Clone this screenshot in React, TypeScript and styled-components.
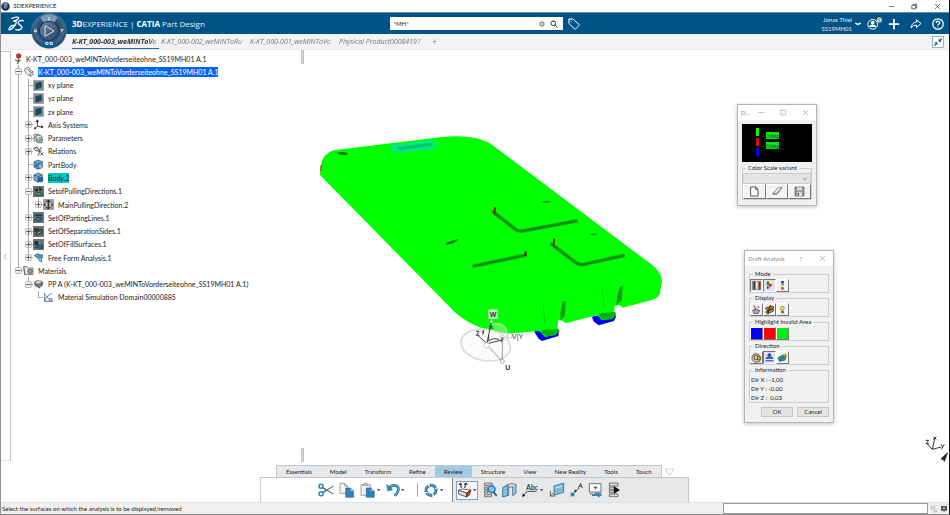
import React from "react";
import styled, { createGlobalStyle, css } from "styled-components";

const GlobalStyle = createGlobalStyle`
  * { box-sizing: border-box; }
  html, body, #root { height: 100%; }
  body { margin: 0; background: #fff; }
  body, button, input, select { font-family: Lato, "Open Sans", sans-serif; font-size: 6px; color: #222; }
  button { padding: 0; border: 0; background: none; cursor: pointer; white-space: nowrap; }
  svg { display: block; flex: none; }
`;

const Shell = styled.div`
  display: flex;
  flex-direction: column;
  height: 100vh;
  overflow: hidden;
  border-left: 1px solid #8d9297;
  border-right: 1px solid #111;
  border-bottom: 1px solid #8a8a8a;
`;

const TitleBar = styled.header`
  display: flex;
  align-items: center;
  gap: 3px;
  height: 12px;
  padding: 0 5px 0 0;
  background: #fff;
  line-height: 12px;
`;
const TitleText = styled.span`
  flex: 1;
  color: #222;
`;
const WindowButton = styled.button<{ $w?: number }>`
  display: flex;
  justify-content: center;
  width: ${(p) => p.$w ?? 14}px;
  color: #888;
`;
const WindowButtons = styled.div`
  display: flex;
  gap: 9px;
`;

const AppBar = styled.div`
  display: flex;
  align-items: center;
  height: 22px;
  background: #005386;
  border-top: 1px solid #5d8fb0;
  color: #fff;
`;
const Brand = styled.div`
  display: flex;
  align-items: center;
  flex: 1;
  padding-left: 7px;
`;
const CompassSlot = styled.div`
  position: relative;
  width: 47px;
  height: 21px;
`;
const CompassButton = styled.button`
  position: absolute;
  left: 6px;
  top: 0;
  z-index: 3;
`;
const BrandName = styled.h1`
  margin: 0;
  font: 400 8px "Open Sans", sans-serif;
  white-space: pre;
  color: #e6eff5;
  b { color: #fff; }
`;
const Search = styled.form`
  display: flex;
  align-items: center;
  gap: 5px;
  width: 173px;
  height: 13px;
  margin-left: 5px;
  padding: 0 5px 0 4px;
  background: #fff;
`;
const SearchInput = styled.input`
  flex: 1;
  min-width: 0;
  height: 11px;
  padding: 0;
  border: 0;
  outline: 0;
  background: none;
`;
const BarRight = styled.div`
  display: flex;
  align-items: center;
  flex: 1;
  padding: 0 5px;
`;
const UserName = styled.div`
  margin-left: auto;
  line-height: 9px;
  text-align: right;
  color: #e2edf4;
`;
const BarActions = styled.div<{ $gap: number }>`
  display: flex;
  align-items: center;
  gap: ${(p) => p.$gap}px;
  margin-left: ${(p) => (p.$gap > 8 ? 10 : 3)}px;
`;

const TabStrip = styled.nav`
  display: flex;
  align-items: center;
  height: 16px;
  padding: 0 5px 0 71px;
  background: #f1f3f4;
  border-bottom: 1px solid #e8eaeb;
`;
const DocTab = styled.button<{ $active?: boolean }>`
  width: 87px;
  height: 15px;
  margin-right: 2px;
  border-bottom: 1px solid ${(p) => (p.$active ? "#1a6fa8" : "transparent")};
  color: ${(p) => (p.$active ? "#333" : "#777")};
  font-family: "Open Sans", sans-serif;
  font-size: 7px;
  font-style: italic;
  font-weight: ${(p) => (p.$active ? 700 : 400)};
  text-align: left;
  line-height: 13px;
`;
const DocTabLabel = styled.span`
  display: block;
  mask-image: linear-gradient(90deg, #000 88%, transparent);
`;
const AddTab = styled.button`
  margin-left: 4px;
  color: #999;
  font-size: 9px;
`;
const Restore = styled.button`
  display: flex;
  margin-left: auto;
`;

const Workspace = styled.main`
  position: relative;
  display: flex;
  flex: 1;
  min-height: 0;
  background: #fff;
`;
const Scene = styled.svg`
  position: absolute;
  inset: 0;
  width: 100%;
  height: 100%;
`;
const Gutter = styled.button`
  display: flex;
  align-items: center;
  justify-content: center;
  width: 10px;
  margin: 1px 0 41px 0;
  border: 1px solid #c4c4c4;
  border-left: 0;
  border-bottom-color: #ddd;
`;
const TreePanel = styled.aside`
  position: relative;
  flex: none;
  width: 290px;
  padding: 2px 0 0 2px;
  font-size: 7px;
`;
const Tree = styled.ul`
  display: grid;
  grid-auto-rows: 1fr;
  min-height: 252px;
  margin: 0;
  padding: 0;
  list-style: none;
`;
const TreeRow = styled.li`
  display: flex;
  align-items: center;
  min-height: 0;
  white-space: nowrap;
`;
type Line = "none" | "full" | "up";
const Guide = styled.span<{ $line: Line; $tick?: boolean }>`
  display: flex;
  align-items: center;
  align-self: stretch;
  width: 10px;
  padding-left: 2px;
  background-repeat: no-repeat;
  background-image: ${(p) => (p.$line === "none" ? "none" : "linear-gradient(#a9a9a9, #a9a9a9)")},
    ${(p) => (p.$tick ? "linear-gradient(#a9a9a9, #a9a9a9)" : "none")};
  background-size: 1px ${(p) => (p.$line === "up" ? "50%" : "100%")}, 5px 1px;
  background-position: 5px 0, right center;
`;
const Toggle = styled.button`
  display: flex;
`;
const NodeIcon = styled.span`
  display: flex;
  width: 11px;
  margin: 0 4px 0 0;
`;
const RootIcon = styled.span`
  display: flex;
  width: 11px;
  margin-right: 2px;
`;
const NodeLabel = styled.span<{ $mark?: "selected" | "active" }>`
  line-height: 10px;
  ${(p) => p.$mark === "selected" && css`background: #0a63f0; color: #fff;`}
  ${(p) => p.$mark === "active" && css`background: #00c8c8;`}
`;
const Splitter = styled.div`
  position: relative;
  display: flex;
  flex-direction: column;
  justify-content: space-between;
  padding-bottom: 40px;
`;
const SplitMark = styled.span`
  width: 3px;
  height: 14px;
  background: #dcdcdc;
  border: 0 solid #c0c0c0;
  border-width: 0 1px;
`;

const Floating = styled.section<{ $top: number; $right: number; $width: number }>`
  position: absolute;
  top: ${(p) => p.$top}px;
  right: ${(p) => p.$right}px;
  width: ${(p) => p.$width}px;
  background: #f0f0f0;
  border: 1px solid #b5b5b5;
  box-shadow: 0 1px 4px rgba(0, 0, 0, 0.25);
`;
const FloatTitle = styled.header`
  display: flex;
  align-items: center;
  height: 15px;
  padding: 0 7px 0 3px;
  background: #fff;
`;
const FloatName = styled.h2`
  flex: 1;
  margin: 0;
  font-size: 6px;
  font-weight: 400;
  color: #8a8a8a;
`;
const FloatButtons = styled.div`
  display: flex;
  gap: 15px;
`;
const FloatBody = styled.div`
  padding: 3px 4px 5px;
`;
const Group = styled.fieldset`
  min-width: 0;
  margin: 0;
  padding: 0;
  border: 1px solid #cfcfcf;
`;
const GroupTitle = styled.legend`
  margin-left: 3px;
  padding: 0 2px;
  line-height: 10px;
`;
const ToolRow = styled.div`
  display: flex;
`;
const Tool = styled.button<{ $on?: boolean; $wide?: boolean }>`
  display: flex;
  align-items: center;
  justify-content: center;
  flex: ${(p) => (p.$wide ? 1 : "none")};
  width: 13px;
  height: ${(p) => (p.$wide ? 15 : 13)}px;
  border: 1px solid;
  border-color: ${(p) => (p.$on ? "#777 #fff #fff #777" : "#fff #777 #777 #fff")};
  background: ${(p) => (p.$on ? "#e2e2e6" : "#f3f3f3")};
`;
const Swatch = styled.span<{ $color: string }>`
  width: 11px;
  height: 11px;
  background: ${(p) => p.$color};
`;
const InfoLine = styled.p`
  margin: 0;
  padding-left: 1px;
  line-height: 9px;
  white-space: pre;
`;
const DialogButtons = styled.div`
  display: flex;
  justify-content: flex-end;
  gap: 4px;
  margin-top: 4px;
`;
const DialogButton = styled.button`
  width: 32px;
  height: 10px;
  border: 1px solid #c6c6c6;
  background: #e4e4e4;
  line-height: 8px;
`;
const ScaleView = styled.div`
  display: flex;
  gap: 3px;
  height: 38px;
  margin: 1px 0;
  padding: 4px 0 0 14px;
  background: #000;
`;
const ScaleBars = styled.div`
  display: grid;
  gap: 2px;
  align-content: start;
`;
const ScaleBar = styled.span<{ $color: string }>`
  width: 3px;
  height: 8px;
  background: ${(p) => p.$color};
`;
const ScaleValues = styled.div`
  display: grid;
  gap: 3px;
  align-content: start;
  padding-top: 4px;
`;
const ScaleValue = styled.span`
  display: flex;
  align-items: center;
  gap: 2px;
  color: #0f0;
  line-height: 7px;
  mark { background: #0e0; color: #064; }
`;
const VariantBox = styled.div`
  display: grid;
  align-items: center;
  svg {
    grid-area: 1 / 1;
    justify-self: end;
    margin-right: 3px;
    pointer-events: none;
  }
`;
const Variant = styled.select`
  grid-area: 1 / 1;
  width: 100%;
  height: 11px;
  padding: 0 2px;
  appearance: none;
  border: 1px solid #ccc;
  border-radius: 0;
  background: #e4e4e4;
`;

const ActionBar = styled.div`
  position: absolute;
  left: 259px;
  right: 260px;
  bottom: 0;
`;
const Sections = styled.nav`
  display: flex;
  align-items: center;
  padding-left: 16px;
`;
const SectionStrip = styled.div`
  display: flex;
  border: 1px solid #c3c7c9;
  border-bottom: 0;
  background: #e6e8e9;
`;
const SectionTab = styled.button<{ $active?: boolean }>`
  height: 11px;
  padding: 0 9px;
  line-height: 10px;
  background: ${(p) => (p.$active ? "#9fcbe4" : "transparent")};
`;
const Favourite = styled.button`
  margin-left: 3px;
`;
const Commands = styled.div`
  display: flex;
  height: 25px;
  border: 1px solid #c3c7c9;
  border-bottom: 0;
`;
const CommandGroup = styled.div<{ $tint?: boolean }>`
  display: flex;
  align-items: center;
  gap: 5px;
  padding-left: ${(p) => (p.$tint ? 3 : 57)}px;
  padding-right: ${(p) => (p.$tint ? 0 : 8)}px;
  flex: ${(p) => (p.$tint ? 1 : "none")};
  background: ${(p) => (p.$tint ? "#e6e8e9" : "#fff")};
  border-left: ${(p) => (p.$tint ? 1 : 0)}px solid #888;
`;
const Command = styled.button<{ $on?: boolean }>`
  display: flex;
  align-items: center;
  height: 19px;
  ${(p) => p.$on && css`
    border: 1px solid #7fa6bd;
    background: #f5f7f8;
  `}
`;
const Divider = styled.span`
  width: 1px;
  height: 14px;
  margin: 0 0 0 7px;
  background: #aaa;
`;

const StatusBar = styled.footer`
  display: flex;
  align-items: center;
  height: 12px;
  padding: 0 1px;
  background: #efefef;
  border-top: 1px solid #e2e2e2;
`;
const StatusText = styled.span`
  flex: 1;
`;
const PowerInput = styled.input`
  width: 205px;
  height: 11px;
  margin-right: 2px;
  padding: 0 2px;
  border: 1px solid #9a9a9a;
  background: #fff;
`;
const StatusIcons = styled.div`
  display: flex;
  gap: 2px;
`;

/* ---------- icons ---------- */

const DsLogo = () => (
  <svg width="17" height="16" viewBox="0 0 51 48" fill="none" stroke="#fff" strokeWidth="4" strokeLinecap="round">
    <path d="M12 7C20 3 33 2 32 6C31 11 22 14 18 15" />
    <path d="M18 15C29 14 25 25 17 33C10 40 2 45 3 39C4 32 14 27 21 28" />
    <path d="M46 14C37 12 29 16 31 22C33 27 43 29 42 35C40 42 30 43 23 41" />
  </svg>
);

const Compass = () => (
  <svg width="36" height="36" viewBox="0 0 108 108">
    <defs>
      <radialGradient id="rim" cx=".5" cy=".45" r=".55">
        <stop offset=".5" stopColor="#24476b" />
        <stop offset=".8" stopColor="#41678b" />
        <stop offset="1" stopColor="#183452" />
      </radialGradient>
      <linearGradient id="core" x1="0" y1="0" x2="1" y2="1">
        <stop offset="0" stopColor="#6c8aa8" />
        <stop offset="1" stopColor="#29415f" />
      </linearGradient>
    </defs>
    <circle cx="54" cy="54" r="53" fill="#5b7c9b" />
    <circle cx="54" cy="54" r="51" fill="url(#rim)" />
    <path d="M28 12A50 50 0 0 1 80 12L70 30A30 30 0 0 0 38 30Z" fill="#7d9bb5" />
    <path d="M28 96A50 50 0 0 0 80 96L70 78A30 30 0 0 1 38 78Z" fill="#0d5d9c" />
    <circle cx="54" cy="54" r="29" fill="url(#core)" stroke="#16304c" strokeWidth="3" />
    <path d="M42 38L69 54L42 70Z" fill="none" stroke="#d9e3ec" strokeWidth="3" />
    <path d="M9 51h9M9 56h9M88 50h8l-6 8M54 12v12M44 88h7v6h-7zM57 88h7v6h-7z" stroke="#e8eef3" strokeWidth="3" fill="none" />
  </svg>
);

const MiniCompass = () => (
  <svg width="9" height="9" viewBox="0 0 18 18">
    <circle cx="9" cy="9" r="8.500" fill="#1d3557" />
    <path d="M4 4a8 8 0 0 1 10 0l-3 3H7z" fill="#6c8fb3" />
    <path d="M7 5.500L13 9L7 12.500Z" fill="#3d5f87" stroke="#b9c9da" />
  </svg>
);

const Glyph = ({ d, size = 12, color = "currentColor", sw = 2, fill = "none", box = 24 }: { d: string; size?: number; color?: string; sw?: number; fill?: string; box?: number }) => (
  <svg width={size} height={size} viewBox={`0 0 ${box} ${box}`} fill={fill} stroke={color} strokeWidth={sw} strokeLinecap="round" strokeLinejoin="round">
    <path d={d} />
  </svg>
);

const UserIcon = () => (
  <svg width="15" height="13" viewBox="0 0 45 39">
    <circle cx="17" cy="22" r="14.500" fill="none" stroke="#fff" strokeWidth="3" />
    <circle cx="17" cy="17" r="5.500" fill="#fff" />
    <path d="M7 30c0-10 20-10 20 0z" fill="#fff" />
    <circle cx="37" cy="9" r="8" fill="#c8c9c0" />
    <path d="M34 9h6M37 6v6" stroke="#8b8e88" strokeWidth="2" />
  </svg>
);

const CollapseIcon = () => (
  <svg width="12" height="12" viewBox="0 0 36 36">
    <rect x="1.500" y="1.500" width="33" height="33" fill="#fff" stroke="#5f93b3" strokeWidth="2" />
    <path d="M20 8v9h9zM16 28v-9H7z" fill="#005386" />
    <path d="M29 8l-7 7M7 29l7-7" stroke="#005386" strokeWidth="3.500" />
  </svg>
);

const ToggleBox = ({ open }: { open?: boolean }) => (
  <svg width="7" height="7" viewBox="0 0 21 21">
    <rect x="1.500" y="1.500" width="18" height="18" rx="4" fill="#f4f4f4" stroke="#999" strokeWidth="2" />
    <path d={open ? "M4 10.500h13" : "M4 10.500h13M10.500 4v13"} stroke="#444" strokeWidth="2.500" />
  </svg>
);

type IconName = "rose" | "part" | "plane" | "axis" | "params" | "relations" | "body" | "bodyActive" | "pulling" | "mainPull" | "parting" | "separation" | "fillSurf" | "freeForm" | "materials" | "material" | "domain";

const art: Record<IconName, React.ReactNode> = {
  rose: (
    <>
      <circle cx="17" cy="9" r="8" fill="#c4404a" />
      <path d="M11 7q6-4 11 2q-6 6-10 1" fill="none" stroke="#7c2027" strokeWidth="2" />
      <path d="M17 17l-3 16M14 24l-8-3M15 26l8-5" stroke="#4d7a3b" strokeWidth="4" />
    </>
  ),
  part: (
    <g fill="#e9ecee" stroke="#4a5258" strokeWidth="2">
      <path d="M5 12q0-8 9-8q8 0 7 8l9 5v10l-8 4-9-6q-8-4-8-13z" />
      <path d="M12 11q3-3 5 1q0 5 8 7M22 31V22l8-5" fill="none" />
    </g>
  ),
  plane: (
    <>
      <rect x="1" y="1" width="31" height="31" fill="#7f898b" />
      <rect x="1" y="1" width="31" height="31" fill="none" stroke="#a3aaab" strokeWidth="2" />
      <path d="M9 11l15-4v15L9 27z" fill="#12506a" stroke="#0c2f3f" strokeWidth="2" />
    </>
  ),
  axis: (
    <>
      <path d="M13 22V5M13 22l15 2M13 22l-8 8" stroke="#222" strokeWidth="2.500" />
      <path d="M13 1l5 8H8zM32 24l-8-5v9zM2 32l3-9 5 5z" fill="#222" />
    </>
  ),
  params: (
    <g fill="#e2e6e4" stroke="#4a5552" strokeWidth="2">
      <path d="M3 4h15v20H3z" />
      <path d="M9 7h12l6 3v19H12z" />
      <path d="M17 15q8-4 11 3t-4 10-9-2-3-9" fill="#b8c9c4" />
      <path d="M6 9v10M20 18v7M24 18v7" />
    </g>
  ),
  relations: (
    <g fill="none" stroke="#333" strokeWidth="2.500">
      <path d="M2 7l10-4 5 8-6 5z" fill="#ddd" />
      <path d="M14 28q3 2 4-5l3-14q1-5 6-4M15 15h11M22 19l9 9M31 19l-9 9" />
    </g>
  ),
  body: (
    <g stroke="#1c4d66" strokeWidth="2">
      <path d="M3 9l12-6 13 5v16l-13 7-12-6z" fill="#6fb1cf" />
      <path d="M3 9l12 5 13-6M15 14v16" fill="none" />
      <circle cx="22" cy="22" r="6" fill="#a6d3e6" />
      <circle cx="9" cy="20" r="3" fill="#2b6e8e" />
    </g>
  ),
  bodyActive: (
    <g stroke="#1c4d66" strokeWidth="2">
      <path d="M3 9l12-6 13 5v16l-13 7-12-6z" fill="#6fb1cf" />
      <path d="M3 9l12 5 13-6M15 14v16" fill="none" />
      <circle cx="23" cy="23" r="7" fill="#2f54d8" />
      <circle cx="29" cy="5" r="3" fill="#ffe53b" stroke="none" />
    </g>
  ),
  pulling: (
    <>
      <rect width="33" height="33" fill="#6a7474" />
      <path d="M5 8h10v8H5zM17 4l11 5-7 8z" fill="#1a2c2c" />
      <path d="M8 25q7-10 18-4l3 6-17 3z" fill="#3c9a68" stroke="#1b2424" strokeWidth="2" />
    </>
  ),
  mainPull: (
    <>
      <rect width="33" height="33" fill="#9a9f9f" />
      <path d="M16 3v27M10 9l6-6 6 6M10 24l6 6 6-6M5 13v8M27 13v8" stroke="#1b1b1b" strokeWidth="3" fill="none" />
      <path d="M9 16h3M21 16h3" stroke="#eee" strokeWidth="4" />
    </>
  ),
  parting: (
    <>
      <rect width="33" height="33" fill="#6a7474" />
      <path d="M5 7h22v6H5z" fill="#1d3b4a" />
      <path d="M5 25l7-9 15 2-5 10z" fill="#2d7a96" stroke="#142630" strokeWidth="2" />
    </>
  ),
  separation: (
    <>
      <rect width="33" height="33" fill="#6a7474" />
      <path d="M4 7h14v10H4z" fill="#1b3a34" />
      <path d="M9 27V15l18-5v13z" fill="#46605e" stroke="#142420" strokeWidth="2" />
      <path d="M13 22l10-4" stroke="#b9c9c5" strokeWidth="2" />
    </>
  ),
  fillSurf: (
    <>
      <rect width="33" height="33" fill="#6a7474" />
      <path d="M5 6h10v13H5z" fill="#15324a" />
      <path d="M8 26q6-10 20-7v9z" fill="#2b6eae" stroke="#131f30" strokeWidth="2" />
    </>
  ),
  freeForm: (
    <g stroke="#1d5977" strokeWidth="2">
      <path d="M4 11q8-9 16-4l10 3-3 8q-9-5-13 0z" fill="#4aa0c8" />
      <path d="M15 18q7-4 12 0l-2 12q-8-2-10-12z" fill="#8bc8e0" />
    </g>
  ),
  materials: (
    <g stroke="#444" strokeWidth="2">
      <path d="M2 5h10l3 4h15v20H5z" fill="#ededed" />
      <circle cx="21" cy="19" r="7" fill="#999" />
      <path d="M2 5l4 24" fill="none" />
    </g>
  ),
  material: (
    <>
      <path d="M3 13q2-9 14-9t14 9q-1 9-9 12l-3 4-5-4q-10-3-11-12z" fill="#666" />
      <path d="M6 13q10-13 20-4q-6 8-20 4z" fill="#d7d7d7" />
      <path d="M12 20h12" stroke="#bbb" strokeWidth="2" />
    </>
  ),
  domain: (
    <g fill="none" strokeWidth="2.500">
      <path d="M5 3v25h25" stroke="#555" />
      <path d="M5 27Q13 7 26 4" stroke="#2277b5" />
      <path d="M8 10l13 14M19 20h8v6h-8z" stroke="#3b82b0" />
    </g>
  ),
};
const TreeIcon = ({ name }: { name: IconName }) => (
  <svg width="11" height="11" viewBox="0 0 33 33">{art[name]}</svg>
);

/* ---------- command icons ---------- */
const Cmd = ({ w = 16, children }: { w?: number; children: React.ReactNode }) => (
  <svg width={w} height="16" viewBox={`0 0 ${w * 3} 48`}>{children}</svg>
);
const Drop = () => (
  <svg width="5" height="6" viewBox="0 0 15 18"><path d="M3 7h10l-5 5z" fill="#222" /></svg>
);
const blue = "#2d84b5";
const deep = "#1b5575";

const CutIcon = () => (
  <Cmd>
    <path d="M14 17L46 36M14 32L46 12" stroke="#777" strokeWidth="3.500" />
    <g fill="none" stroke={blue} strokeWidth="4.500"><circle cx="9" cy="13" r="6" /><circle cx="9" cy="35" r="6" /></g>
    <path d="M14 17l12 7-12 8" fill="none" stroke={blue} strokeWidth="4" />
  </Cmd>
);
const CopyIcon = () => (
  <Cmd>
    <path d="M3 4h14l8 8v22H3z" fill="#f5f5f5" stroke="#777" strokeWidth="2" />
    <path d="M17 4v8h8" fill="none" stroke="#777" strokeWidth="2" />
    <path d="M20 18h15l9 9v19H20z" fill={blue} stroke={deep} strokeWidth="1.500" />
    <path d="M35 18v9h9z" fill="#a8d3ea" />
  </Cmd>
);
const PasteIcon = () => (
  <Cmd>
    <path d="M3 8h28v32H3z" fill="#f0f0f0" stroke="#777" strokeWidth="2" />
    <path d="M10 10q0-7 7-7t7 7z" fill="#ddd" stroke="#777" strokeWidth="2" />
    <path d="M19 18h15l9 9v19H19z" fill={blue} stroke={deep} strokeWidth="1.500" />
    <path d="M34 18v9h9z" fill="#a8d3ea" />
  </Cmd>
);
const UndoIcon = () => (
  <Cmd w={14}>
    <path d="M10 16Q24 5 35 14Q42 26 26 41" fill="none" stroke={deep} strokeWidth="8" />
    <path d="M10 16Q24 5 35 14Q42 26 26 41" fill="none" stroke="#4fa3cf" strokeWidth="5" />
    <path d="M2 7l3 20 16-4z" fill={blue} stroke={deep} />
  </Cmd>
);
const UpdateIcon = () => (
  <Cmd>
    <circle cx="24" cy="25" r="15" fill="none" stroke={deep} strokeWidth="9" strokeDasharray="14 9.560" />
    <circle cx="24" cy="25" r="15" fill="none" stroke="#4a9dc8" strokeWidth="6" strokeDasharray="13 10.560" />
    <path d="M20 3l9 7-9 7zM46 20l-7 9-7-9zM28 47l-9-7 9-7zM2 30l7-9 7 9z" fill={blue} />
  </Cmd>
);
const DraftIcon = () => (
  <Cmd w={15}>
    <path d="M4 25l11-4 26 3-12 9z" fill="#fff" stroke="#222" strokeWidth="2" />
    <path d="M4 25l25 8v12L4 36z" fill="#ddd" stroke="#222" strokeWidth="2" />
    <path d="M29 33l13-9-5 15-8 6z" fill="#d23a1c" stroke="#5a1508" strokeWidth="2" />
    <path d="M13 18L10 4M6 9l4-6 5 5M23 18l4-14M21 8l6-5 4 6" fill="none" stroke="#222" strokeWidth="3" />
  </Cmd>
);
const InspectIcon = () => (
  <Cmd w={14}>
    <path d="M4 3h24v8H4zM4 15h10v7H4zM4 26h10v7H4zM4 37h22v7H4z" fill="#bfc5c8" stroke="#555" strokeWidth="2" />
    <circle cx="26" cy="22" r="10" fill="#8cc8e6" stroke={blue} strokeWidth="5" />
    <path d="M32 30l9 12" stroke={deep} strokeWidth="5" />
  </Cmd>
);
const SectionIcon = () => (
  <Cmd w={15}>
    <path d="M2 17l15-9v33L2 45z" fill="#69b1d6" stroke={deep} strokeWidth="2" />
    <path d="M17 8q14-7 25 0l-7 8q-8-4-15 1z" fill="#ddd" stroke="#444" strokeWidth="2" />
    <path d="M20 17v25M32 15v26l10-7V8" fill="#9acbe3" stroke={deep} strokeWidth="2" />
    <path d="M4 23l12-7M4 32l12-7M4 40l12-7" stroke="#e2f1f8" strokeWidth="2" />
  </Cmd>
);
const TextIcon = () => (
  <Cmd w={17}>
    <path d="M2 42L16 28H44" fill="none" stroke="#222" strokeWidth="2.500" />
    <path d="M0 45l3-11 7 7z" fill="#222" />
    <text x="13" y="23" fontFamily="Lato, sans-serif" fontSize="20" fontWeight="600" fill="#222">Abc</text>
  </Cmd>
);
const ViewIcon = () => (
  <Cmd>
    <path d="M15 12l29-9v28l-29 9z" fill="#7db9d8" stroke={deep} strokeWidth="2" />
    <path d="M20 18l19-6" stroke="#d4eaf5" strokeWidth="3" />
    <path d="M4 27v15h14M4 42l9-9" fill="none" stroke="#444" strokeWidth="2.500" />
  </Cmd>
);
const AnnotIcon = () => (
  <Cmd w={13}>
    <path d="M8 38L27 18" stroke="#333" strokeWidth="2.500" />
    <path d="M2 32h11v11H2z" fill={blue} />
    <path d="M12 30l3-8 6 6z" fill="#222" />
    <path d="M25 18l7-14 5 14M28 13h8" fill="none" stroke="#333" strokeWidth="2.500" />
  </Cmd>
);
const CaptureIcon = () => (
  <Cmd w={15}>
    <path d="M4 5h35v25H4z" fill="#fff" stroke="#555" strokeWidth="2.500" />
    <path d="M17 17h11M22 12v11" stroke="#555" strokeWidth="3" />
    <path d="M5 36h10M20 34h18v6h4" stroke="#555" strokeWidth="2.500" fill="none" />
    <path d="M12 36h18v-5l10 8-10 8v-5H12z" fill={blue} />
  </Cmd>
);
const PlayIcon = () => (
  <Cmd w={14}>
    <path d="M4 3h26v9H4zM4 36h26v8H4zM4 15h14v7H4zM4 25h14v7H4z" fill="#d6dadc" stroke="#444" strokeWidth="2" />
    <path d="M18 13l18 11-18 11z" fill="#111" />
  </Cmd>
);

/* ---------- data ---------- */
interface Node {
  label: string;
  icon: IconName;
  guides: Line[];
  toggle?: "open" | "closed";
  mark?: "selected" | "active";
}
const nodes: Node[] = [
  { label: "K-KT_000-003_weMINToVorderseiteohne_SS19MH01 A.1", icon: "part", guides: ["full"], toggle: "open", mark: "selected" },
  { label: "xy plane", icon: "plane", guides: ["full", "full"] },
  { label: "yz plane", icon: "plane", guides: ["full", "full"] },
  { label: "zx plane", icon: "plane", guides: ["full", "full"] },
  { label: "Axis Systems", icon: "axis", guides: ["full", "full"], toggle: "closed" },
  { label: "Parameters", icon: "params", guides: ["full", "full"], toggle: "closed" },
  { label: "Relations", icon: "relations", guides: ["full", "full"], toggle: "closed" },
  { label: "PartBody", icon: "body", guides: ["full", "full"] },
  { label: "Body.2", icon: "bodyActive", guides: ["full", "full"], toggle: "closed", mark: "active" },
  { label: "SetofPullingDirections.1", icon: "pulling", guides: ["full", "full"], toggle: "open" },
  { label: "MainPullingDirection.2", icon: "mainPull", guides: ["full", "full", "up"], toggle: "closed" },
  { label: "SetOfPartingLines.1", icon: "parting", guides: ["full", "full"], toggle: "closed" },
  { label: "SetOfSeparationSides.1", icon: "separation", guides: ["full", "full"], toggle: "closed" },
  { label: "SetOfFillSurfaces.1", icon: "fillSurf", guides: ["full", "full"], toggle: "closed" },
  { label: "Free Form Analysis.1", icon: "freeForm", guides: ["full", "up"], toggle: "closed" },
  { label: "Materials", icon: "materials", guides: ["up"], toggle: "open" },
  { label: "PP A (K-KT_000-003_weMINToVorderseiteohne_SS19MH01 A.1)", icon: "material", guides: ["none", "up"], toggle: "open" },
  { label: "Material Simulation Domain00000885", icon: "domain", guides: ["none", "none", "up"] },
];
const sections = ["Essentials", "Model", "Transform", "Refine", "Review", "Structure", "View", "New Reality", "Tools", "Touch"];
const documents = ["K-KT_000-003_weMINToVo", "K-KT_000-002_weMINToRu", "K-KT_000-001_weMINToVo", "Physical Product00084197"];

const wall = (d: string) => (
  <g fill="none" strokeLinejoin="round" strokeLinecap="round">
    <path d={d} stroke="#00dc00" strokeWidth="14" />
    <path d={d} stroke="#00b000" strokeWidth="9" />
    <path d={d} stroke="#067806" strokeWidth="4" />
  </g>
);

const Model = () => (
  <Scene viewBox="1 50 948 452" role="img" aria-label="Draft analysis of the part">
    <defs>
      <linearGradient id="rib" x1="0" x2="1" y1="0" y2="0">
        <stop offset="0" stopColor="#0c0" /><stop offset=".5" stopColor="#080" /><stop offset="1" stopColor="#0d0" />
      </linearGradient>
    </defs>
    <g transform="translate(300 120) scale(.33333)">
      <path d="M702 634L716 656L726 663L775 648L778 632L740 628Z" fill="#0000f2" />
      <path d="M876 590L880 604L896 616L942 603L949 588L910 582Z" fill="#0000f2" />
      <path d="M100 91L425 51Q520 42 570 70L1050 430Q1090 460 1085 488L1080 520Q1076 534 1055 540L968 563L958 555L944 558L942 574L949 584L936 597L905 601L892 585L880 588L797 610L788 602L775 600L772 624L779 634L766 645L735 651L718 633L640 640Q540 640 468 580L60 165L62 140Q68 100 100 91Z" fill="#00ff00" />
      <path d="M273 77L395 64L409 72L404 83L291 97L273 88Z" fill="#08f050" stroke="#00d8e8" strokeWidth="3" />
      <path d="M290 83L392 70L396 76L297 89Z" fill="#08c850" stroke="#00b4b4" strokeWidth="2" />
      <path d="M110 98q15-5 32 1v6q-18 3-32-7z" fill="#0a7a0a" />
      <path d="M62 135l4 0-2 20-4-2z" fill="#d04010" />
      {wall("M580 276L646 328Q656 335 668 333L828 303")}
      <path d="M582 262l6 0-2 24-5-4z" fill="#a01c08" />
      {wall("M756 373L826 427Q838 436 852 433L970 407")}
      <path d="M760 356l5 0-2 24-5-3z" fill="#a01c08" />
      {wall("M522 438L674 406")}
      <path d="M675 392l5 4 1 11-8 2z" fill="#7a1a08" />
      <path d="M438 368L460 361L476 357L462 369L438 375Z" fill="#0a7a0a" />
      <path d="M725 243h28l-8 5h-14zM868 341h24l-5 5h-13z" fill="#089808" />
      <path d="M788 545L799 541L795 588L780 602L782 570Z" fill="url(#rib)" />
      <path d="M960 500L970 498L966 540L948 556L952 525Z" fill="url(#rib)" />
      <path d="M729 552L736 620M906 505L914 565" stroke="#00d400" strokeWidth="3" fill="none" />
      <path d="M728 630L776 626L778 636L764 645L738 649L722 636ZM902 580L946 575L948 585L936 596L908 600L896 586Z" fill="#0ab00a" />
      <path d="M120 200L180 256M330 410L430 508" stroke="#5ac800" strokeWidth="2" />
      <g fill="none" stroke="#dadada">
        <ellipse cx="557" cy="675" rx="75" ry="47" transform="rotate(9 557 675)" fill="#f6f6f6" fillOpacity=".4" strokeWidth="5" />
        <path d="M574 612Q620 605 622 640Q620 660 606 662" fill="#cfe8cf" fillOpacity=".4" strokeWidth="3" />
        <path d="M607 660V724M560 674L607 724" stroke="#888" strokeWidth="2.500" />
        <path d="M622 640h14v14h-14z" stroke="#aaa" strokeWidth="2" />
      </g>
      <g fill="none" stroke="#222" strokeWidth="2.500">
        <path d="M560 672L574 608M562 671L606 660M558 668L532 645M562 664L580 656L598 658M566 645V660" />
        <path d="M567 618l10 8M577 618l-10 10M528 634h9l-8 12h9M545 632l6 8M552 630l-4 14M603 652l5 6M610 652l-7 14" />
      </g>
      <circle cx="560" cy="676" r="8" fill="#fff" stroke="#bbb" strokeWidth="2" />
      <circle cx="607" cy="724" r="6" fill="#fff" stroke="#888" strokeWidth="2" />
      <circle cx="574" cy="605" r="4" fill="#fff" />
      <rect x="565" y="568" width="28" height="29" fill="#b8ecb8" />
      <g fontFamily="Liberation Sans, sans-serif" fontSize="21" fontWeight="700" fill="#333">
        <text x="569" y="591">W</text>
        <text x="636" y="656" fontWeight="400">V|Y</text>
        <text x="616" y="749">U</text>
      </g>
    </g>
    <g transform="translate(740 425) scale(.33333)" fill="none" stroke="#333" strokeWidth="3">
      <path d="M577 73L584 42M577 73L561 56M577 73L604 66M580 35l9 8M589 35l-9 9M557 46h9l-8 10h9M602 58l6 7M613 58l-9 15" />
      <path d="M622 84L603 102L610 103L613 109Z" fill="#222" />
    </g>
  </Scene>
);

const CloseGlyph = ({ color = "#333" }: { color?: string }) => <Glyph d="M5 5L19 19M19 5L5 19" size={7} color={color} sw={2.5} />;

const icon9 = (children: React.ReactNode) => <svg width="11" height="11" viewBox="0 0 33 33">{children}</svg>;

export default function App() {
  return (
    <Shell>
      <GlobalStyle />
      <TitleBar>
        <MiniCompass />
        <TitleText>3DEXPERIENCE</TitleText>
        <WindowButtons>
          <WindowButton aria-label="Minimise"><Glyph d="M4 12H20" size={7} color="#333" /></WindowButton>
          <WindowButton aria-label="Restore"><Glyph d="M4 8H16V20H4ZM8 8V4H20V16H16" size={7} color="#333" sw={2.5} /></WindowButton>
          <WindowButton aria-label="Close"><CloseGlyph /></WindowButton>
        </WindowButtons>
      </TitleBar>

      <AppBar>
        <Brand>
          <DsLogo />
          <CompassSlot>
            <CompassButton aria-label="Compass"><Compass /></CompassButton>
          </CompassSlot>
          <BrandName><b>3D</b>EXPERIENCE | <b>CATIA</b> Part Design</BrandName>
        </Brand>
        <Search onSubmit={(e) => e.preventDefault()}>
          <SearchInput aria-label="Search" defaultValue="*MH*" />
          <svg width="6" height="6" viewBox="0 0 18 18"><circle cx="9" cy="9" r="8" fill="#999" /><path d="M6 6l6 6M12 6l-6 6" stroke="#fff" strokeWidth="2" /></svg>
          <Glyph d="M10 3a7 7 0 1 0 0 14a7 7 0 1 0 0-14M15.500 15.500L22 22" size={8} color="#333" sw={3} />
        </Search>
        <BarRight>
          <Glyph d="M2 3v8l11 11q1 1 2 0l7-7q1-1 0-2L11 3q-1-1-2-1H3q-1 0-1 1zM6.500 6.500h.1" size={12} color="#fff" sw={2} />
          <UserName>Jonas Thiel<br />SS19MH01</UserName>
          <BarActions $gap={6}>
            <Glyph d="M3 9q9 8 18 0" size={6} color="#fff" sw={5} />
            <UserIcon />
            <Glyph d="M12 3V21M3 12H21" size={12} color="#fff" sw={3.5} />
          </BarActions>
          <BarActions $gap={10}>
            <Glyph d="M13 4l9 7-9 8v-5q-8 0-11 6q1-11 11-12z" size={12} color="#fff" sw={2} />
            <Glyph d="M12 1.500a10.500 10.500 0 1 0 0 21a10.500 10.500 0 1 0 0-21M8.500 9q0-3 3.500-3t3.500 3t-3.500 4v1M12 18v.1" size={12} color="#fff" sw={2.5} />
          </BarActions>
        </BarRight>
      </AppBar>

      <TabStrip>
        {documents.map((d, i) => (
          <DocTab key={d} $active={i === 0}><DocTabLabel>{d}</DocTabLabel></DocTab>
        ))}
        <AddTab aria-label="New tab">+</AddTab>
        <Restore aria-label="Collapse"><CollapseIcon /></Restore>
      </TabStrip>

      <Workspace>
        <Model />
        <Gutter aria-label="Collapse tree"><Glyph d="M16 3L6 12L16 21" size={7} color="#888" /></Gutter>
        <TreePanel>
          <Tree>
            <TreeRow>
              <RootIcon><TreeIcon name="rose" /></RootIcon>
              <NodeLabel>K-KT_000-003_weMINToVorderseiteohne_SS19MH01 A.1</NodeLabel>
            </TreeRow>
            {nodes.map((n, i) => (
              <TreeRow key={i}>
                {n.guides.map((g, k) => {
                  const own = k === n.guides.length - 1;
                  return (
                    <Guide key={k} $line={g} $tick={own}>
                      {own && n.toggle && (
                        <Toggle aria-label={n.label}><ToggleBox open={n.toggle === "open"} /></Toggle>
                      )}
                    </Guide>
                  );
                })}
                <NodeIcon><TreeIcon name={n.icon} /></NodeIcon>
                <NodeLabel $mark={n.mark}>{n.label}</NodeLabel>
              </TreeRow>
            ))}
          </Tree>
        </TreePanel>
        <Splitter><SplitMark /><SplitMark /></Splitter>

        <Floating $top={54} $right={132} $width={80}>
          <FloatTitle>
            <FloatName>D...</FloatName>
            <FloatButtons>
              <WindowButton $w={7} aria-label="Minimise"><Glyph d="M3 12H21" size={7} color="#999" /></WindowButton>
              <WindowButton $w={7} aria-label="Maximise"><Glyph d="M4 4H20V20H4Z" size={7} color="#999" /></WindowButton>
              <WindowButton $w={7} aria-label="Close"><CloseGlyph color="#999" /></WindowButton>
            </FloatButtons>
          </FloatTitle>
          <FloatBody>
            <ScaleView>
              <ScaleBars>
                <ScaleBar $color="#0f0" /><ScaleBar $color="#f00" /><ScaleBar $color="#00f" />
              </ScaleBars>
              <ScaleValues>
                <ScaleValue>- <mark>2deg</mark></ScaleValue>
                <ScaleValue>- <mark>0deg</mark></ScaleValue>
              </ScaleValues>
            </ScaleView>
            <Group>
              <GroupTitle>Color Scale variant</GroupTitle>
              <VariantBox>
                <Variant aria-label="Color Scale variant" />
                <Glyph d="M5 9L12 16L19 9" size={6} color="#777" sw={3} />
              </VariantBox>
              <ToolRow>
                <Tool $wide aria-label="New">{icon9(<path d="M5 3h15l7 7v20H5zM20 3v7h7" fill="#fff" stroke="#555" strokeWidth="3" />)}</Tool>
                <Tool $wide aria-label="Erase">{icon9(<path d="M3 22L19 5h11L15 25H3zM3 22h11L30 5" fill="#eee" stroke="#777" strokeWidth="2.500" />)}</Tool>
                <Tool $wide aria-label="Save">{icon9(<><path d="M3 3h27v27H3z" fill="#999" stroke="#555" strokeWidth="2" /><path d="M9 4h15v9H9zM9 19h15v11H9z" fill="#ddd" /><path d="M13 21v8" stroke="#555" strokeWidth="4" /></>)}</Tool>
              </ToolRow>
            </Group>
          </FloatBody>
        </Floating>

        <Floating $top={200} $right={115} $width={90}>
          <FloatTitle>
            <FloatName>Draft Analysis</FloatName>
            <FloatButtons>
              <WindowButton $w={7} aria-label="Help">?</WindowButton>
              <WindowButton $w={7} aria-label="Close"><CloseGlyph color="#999" /></WindowButton>
            </FloatButtons>
          </FloatTitle>
          <FloatBody>
            <Group>
              <GroupTitle>Mode</GroupTitle>
              <ToolRow>
                <Tool $on aria-label="Quick">{icon9(<><path d="M3 3h27v27H3z" fill="#888" /><path d="M8 5h6v23H8z" fill="#2b3550" /><path d="M14 5h6v23h-6z" fill="#fff" /><path d="M20 5h3v23h-3z" fill="#d98032" /><path d="M24 5h4v23h-4z" fill="#444" /></>)}</Tool>
                <Tool $on aria-label="Full">{icon9(<><path d="M8 4h7v12H8z" fill="#1c9c2c" /><path d="M13 9l12 5-8 9z" fill="#e01818" /><path d="M9 19h5v7H9z" fill="#2038c0" /></>)}</Tool>
                <Tool aria-label="Color scale">{icon9(<><path d="M13 3h7v7h-7z" fill="#102080" /><path d="M13 10h7v6h-7z" fill="#18a0d0" /><path d="M13 16h7v6h-7z" fill="#e8d820" /><path d="M13 22h7v7h-7z" fill="#d02818" /></>)}</Tool>
              </ToolRow>
            </Group>
            <Group>
              <GroupTitle>Display</GroupTitle>
              <ToolRow>
                <Tool aria-label="On the fly">{icon9(<><path d="M8 4l8 13" stroke="#333" strokeWidth="3" /><path d="M5 18q10-6 22 2l-6 9H9z" fill="#9aa0c8" stroke="#445" strokeWidth="2" /><path d="M22 5v8M18 9h8" stroke="#d05070" strokeWidth="2" /></>)}</Tool>
                <Tool aria-label="No highlight">{icon9(<><path d="M5 12l21-6 3 6-20 8zM5 24l22-10 2 6-18 10z" fill="#f09020" stroke="#222" strokeWidth="2.500" /><path d="M19 3l-8 27" stroke="#222" strokeWidth="3" /></>)}</Tool>
                <Tool aria-label="Light">{icon9(<><circle cx="16" cy="13" r="6" fill="#e8e820" stroke="#777" strokeWidth="2" /><path d="M13 20h7v8h-7z" fill="#555" /></>)}</Tool>
              </ToolRow>
            </Group>
            <Group>
              <GroupTitle>Highlight Invalid Area</GroupTitle>
              <ToolRow>
                <Tool aria-label="Blue"><Swatch $color="#00f" /></Tool>
                <Tool aria-label="Red"><Swatch $color="#f00" /></Tool>
                <Tool aria-label="Green"><Swatch $color="#0e1" /></Tool>
              </ToolRow>
            </Group>
            <Group>
              <GroupTitle>Direction</GroupTitle>
              <ToolRow>
                <Tool aria-label="Lock direction">{icon9(<><path d="M3 12l9-8 12 4 6 9-4 12-15 2-8-8z" fill="#c8c0a8" stroke="#333" strokeWidth="2" /><path d="M10 10h9v12h-9zM20 14h7v9h-7z" fill="#f0e060" stroke="#333" strokeWidth="2" /></>)}</Tool>
                <Tool $on aria-label="Compass direction">{icon9(<><path d="M16 2l8 9h-4v4h6l2 5H5l2-5h6v-4H8z" fill="#1848b8" /><path d="M5 24h23v4H5z" fill="#3870d0" /></>)}</Tool>
                <Tool aria-label="Inverse direction">{icon9(<><path d="M3 18q8-9 25-8l-4 14-16 4z" fill="#28a088" stroke="#234" strokeWidth="2" /><path d="M14 8l15-4-4 9z" fill="#e0a020" /><path d="M7 27l14-12" stroke="#2048b0" strokeWidth="3" /></>)}</Tool>
              </ToolRow>
            </Group>
            <Group>
              <GroupTitle>Information</GroupTitle>
              <InfoLine>Dir X : -1,00</InfoLine>
              <InfoLine>Dir Y : -0,00</InfoLine>
              <InfoLine>Dir Z :  0,03</InfoLine>
            </Group>
            <DialogButtons>
              <DialogButton>OK</DialogButton>
              <DialogButton>Cancel</DialogButton>
            </DialogButtons>
          </FloatBody>
        </Floating>

        <ActionBar>
          <Sections>
            <SectionStrip>
              {sections.map((s) => <SectionTab key={s} $active={s === "Review"}>{s}</SectionTab>)}
            </SectionStrip>
            <Favourite aria-label="Favourites"><Glyph d="M12 21L2 10Q1 3 7 4L12 8L17 4Q23 3 22 10Z" size={9} color="#bbb" /></Favourite>
          </Sections>
          <Commands>
            <CommandGroup>
              <Command aria-label="Cut"><CutIcon /></Command>
              <Command aria-label="Copy"><CopyIcon /></Command>
              <Command aria-label="Paste"><PasteIcon /><Drop /></Command>
              <Command aria-label="Undo"><UndoIcon /><Drop /></Command>
              <Divider />
              <Command aria-label="Update"><UpdateIcon /><Drop /></Command>
            </CommandGroup>
            <CommandGroup $tint>
              <Command $on aria-label="Draft analysis"><DraftIcon /><Drop /></Command>
              <Command aria-label="Inspect"><InspectIcon /></Command>
              <Command aria-label="Section"><SectionIcon /></Command>
              <Command aria-label="Text with leader"><TextIcon /><Drop /></Command>
              <Command aria-label="View"><ViewIcon /></Command>
              <Command aria-label="Annotation"><AnnotIcon /></Command>
              <Command aria-label="Capture"><CaptureIcon /></Command>
              <Command aria-label="Play"><PlayIcon /></Command>
            </CommandGroup>
          </Commands>
        </ActionBar>
      </Workspace>

      <StatusBar>
        <StatusText>Select the surfaces on which the analysis is to be displayed/removed</StatusText>
        <PowerInput aria-label="Power input" />
        <StatusIcons>
          <svg width="8" height="8" viewBox="0 0 24 24"><path d="M4 4h10v8H4zM12 16h8v5h-8z" fill="none" stroke="#aaa" strokeWidth="2" /></svg>
          <svg width="8" height="8" viewBox="0 0 24 24"><path d="M3 3h18v14h-6l-3 5-2-5H3z" fill="#555" /><path d="M9 7h6v6H9z" fill="#aaa" /></svg>
        </StatusIcons>
      </StatusBar>
    </Shell>
  );
}
